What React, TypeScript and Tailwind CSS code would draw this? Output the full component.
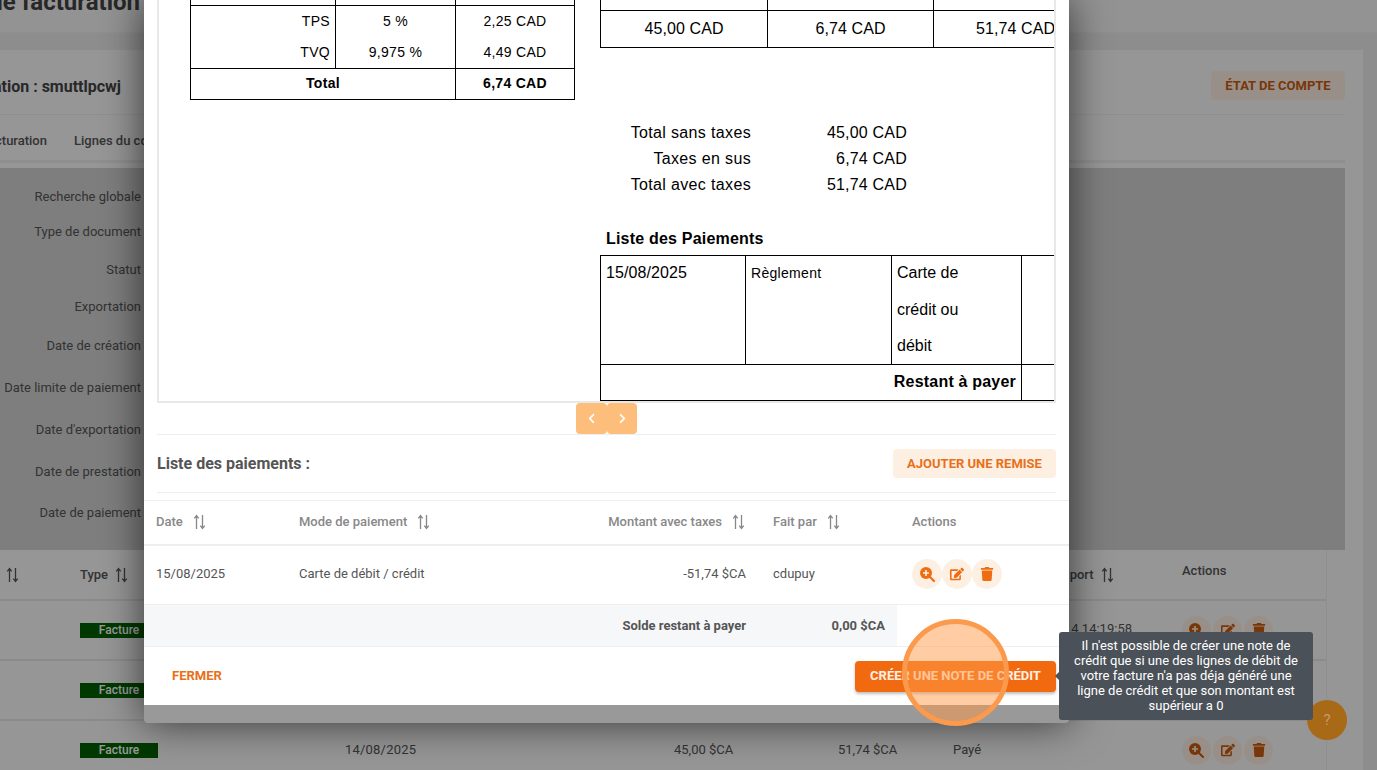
import React from "react";
import { FaEdit, FaTrash, FaChevronLeft, FaChevronRight } from "react-icons/fa";

const Sort = ({ className = "" }: { className?: string }) => (
  <svg width="15" height="16" viewBox="0 0 15 16" className={className} fill="none" stroke="currentColor" strokeWidth="1.3">
    <path d="M4.5 15V2M2.3 4.3 4.5 1.5l2.2 2.8" />
    <path d="M10.5 1v13M8.3 11.7l2.2 2.8 2.2-2.8" />
  </svg>
);

const Loupe = ({ plus }: { plus: string }) => (
  <svg width="15" height="15" viewBox="0 0 15 15">
    <circle cx="6" cy="6" r="6" fill="currentColor" />
    <path d="M6 3v6M3 6h6" stroke={plus} strokeWidth="1.6" />
    <path d="M10 10l4 4" stroke="currentColor" strokeWidth="2.2" strokeLinecap="round" />
  </svg>
);

const filters: [string, string][] = [
  ["Recherche globale", "h-[36px]"],
  ["Type de document", "h-[34px]"],
  ["Statut", "h-[42px]"],
  ["Exportation", "h-[32px]"],
  ["Date de création", "h-[46px]"],
  ["Date limite de paiement", "h-[38px]"],
  ["Date d'exportation", "h-[46px]"],
  ["Date de prestation", "h-[38px]"],
  ["Date de paiement", "h-[44px]"],
];

const BgActions = () => (
  <div className="flex gap-[2px]">
    <span className="w-[29px] h-[29px] rounded-full bg-[#fdf0e3] flex items-center justify-center text-[#c85a10] text-[14px]"><Loupe plus="#fdf0e3" /></span>
    <span className="w-[29px] h-[29px] rounded-full bg-[#fdf0e3] flex items-center justify-center text-[#c85a10] text-[14px]"><FaEdit /></span>
    <span className="w-[29px] h-[29px] rounded-full bg-[#fdf0e3] flex items-center justify-center text-[#c85a10] text-[14px]"><FaTrash /></span>
  </div>
);

const BgRow = ({ time }: { time?: boolean }) => (
  <div className="h-[60px] flex items-center border-b-2 border-[#e8e8e8] text-[13px] text-[#555]">
    <div className="w-[80px]" />
    <div className="w-[265px]">
      <span className="block w-[78px] h-[15px] bg-[#006000] text-white font-medium text-[12px] leading-[15px] text-center">Facture</span>
    </div>
    <div className="w-[329px] tracking-[0.2px]">14/08/2025</div>
    <div className="w-[164px]">45,00 $CA</div>
    <div className="w-[115px]">51,74 $CA</div>
    <div className="w-[60px]">Payé</div>
    <div className="w-[169px] pr-[50px] text-right -mt-[2px]">{time ? "2025-08-14 14:19:58" : ""}</div>
    <BgActions />
  </div>
);

const Background = () => (
  <div className="h-[770px] bg-[#ebebeb] flex flex-col overflow-hidden font-['Roboto',sans-serif]">
    <div className="h-[33px] shrink-0 bg-[#f6f6f6] overflow-hidden border-b border-[#eee]">
      <h1 className="text-[24px] leading-[24px] font-bold text-[#444] -mt-[10px] w-[140px] flex justify-end whitespace-nowrap">Détail de facturation</h1>
    </div>
    <div className="h-[17px] shrink-0" />
    <div className="flex-1 min-h-0 bg-[#fafafa] mr-[14px] flex flex-col">
      <div className="h-[65px] shrink-0 mr-[18px] border-b border-[#eee] flex items-center justify-between pt-[7px]">
        <span className="text-[16px] font-bold text-[#444] w-[121px] whitespace-nowrap flex justify-end pt-[2px]">Facturation : smuttlpcwj</span>
        <span className="w-[134px] h-[29px] rounded bg-[#fdf0e3] text-[#c85a10] text-[13px] font-bold flex items-center justify-center">ÉTAT DE COMPTE</span>
      </div>
      <div className="h-[48px] shrink-0 mr-[18px] border-b-[3px] border-[#eee] flex items-center text-[13px] font-medium text-[#555] pt-[6px]">
        <span className="w-[74px]"><span className="w-[47px] overflow-hidden whitespace-nowrap flex justify-end">Facturation</span></span>
        <span>Lignes du compte</span>
      </div>
      <div className="h-[5px] shrink-0" />
      <div className="h-[382px] shrink-0 mr-[18px] bg-[#d2d2d2] flex flex-col pt-[11px]">
        {filters.map(([label, h]) => (
          <div key={label} className={`${h} shrink-0 w-[141px] flex items-center justify-end text-[13px] text-[#555] whitespace-nowrap`}>{label}</div>
        ))}
      </div>
      <div className="mr-[36px] flex-1 border-r border-[#efefef]">
        <div className="h-[51px] flex items-center border-b-2 border-[#e8e8e8] text-[13px] font-medium text-[#555]">
          <div className="w-[80px] pl-[5px]"><Sort /></div>
          <div className="w-[937px] flex items-center gap-[6px]">Type <Sort /></div>
          <div className="w-[165px] flex items-center gap-[6px]">Date d'export <Sort /></div>
          <div className="-mt-[8px]">Actions</div>
        </div>
        <BgRow time />
        <BgRow time />
        <BgRow />
      </div>
    </div>
  </div>
);

const Cell = ({ className = "", children }: { className?: string; children?: React.ReactNode }) => (
  <div className={`flex items-center ${className}`}>{children}</div>
);

const Viewer = () => (
  <div className="h-[403px] shrink-0 mx-[13px] border-l-2 border-b-2 border-r-2 border-[#e8e8e8] overflow-hidden flex text-black font-['Liberation_Sans',sans-serif] bg-white">
    <div className="w-[441px] shrink-0 pl-[31px]">
      <div className="w-[385px] text-[14px] tracking-[0.3px] border-b border-x border-black">
        <div className="h-[6px] flex border-b border-black">
          <div className="w-[145px] border-r border-black" />
          <div className="w-[120px] border-r border-black" />
        </div>
        <div className="flex h-[31px]">
          <Cell className="w-[145px] justify-end pr-[5px] border-r border-black">TPS</Cell>
          <Cell className="w-[120px] justify-center border-r border-black">5 %</Cell>
          <Cell className="flex-1 justify-center">2,25 CAD</Cell>
        </div>
        <div className="flex h-[32px] border-b border-black">
          <Cell className="w-[145px] justify-end pr-[5px] border-r border-black">TVQ</Cell>
          <Cell className="w-[120px] justify-center border-r border-black">9,975 %</Cell>
          <Cell className="flex-1 justify-center">4,49 CAD</Cell>
        </div>
        <div className="flex h-[30px] font-bold">
          <Cell className="w-[265px] justify-center border-r border-black pb-[1px]">Total</Cell>
          <Cell className="flex-1 justify-center pb-[1px]">6,74 CAD</Cell>
        </div>
      </div>
    </div>
    <div className="flex-1 overflow-hidden text-[16px]">
      <div className="w-[500px]">
        <div className="h-[48px] border-b border-l border-black flex tracking-[0.1px]">
          <div className="w-[167px] flex flex-col border-r border-black">
            <div className="h-[11px] border-b border-black -mr-[500px]" />
            <div className="flex-1 flex items-center justify-center">45,00 CAD</div>
          </div>
          <div className="w-[166px] flex flex-col border-r border-black">
            <div className="h-[11px]" />
            <div className="flex-1 flex items-center justify-center">6,74 CAD</div>
          </div>
          <div className="flex flex-col pl-[42px]">
            <div className="h-[11px]" />
            <div className="flex-1 flex items-center whitespace-nowrap">51,74 CAD</div>
          </div>
        </div>
      </div>
      <div className="pt-[72px] w-[307px] leading-[26px] tracking-[0.2px]">
        {[["Total sans taxes", "45,00 CAD"], ["Taxes en sus", "6,74 CAD"], ["Total avec taxes", "51,74 CAD"]].map(([a, b]) => (
          <div key={a} className="flex justify-between">
            <span className="w-[151px] text-right whitespace-nowrap flex justify-end tracking-[0.35px]">{a}</span>
            <span className="text-right">{b}</span>
          </div>
        ))}
      </div>
      <div className="pl-[6px] pt-[28px] h-[58px] font-bold tracking-[0.2px] leading-[26px]">Liste des Paiements</div>
      <div className="w-[500px] border border-black -mt-[1px] h-[146px] flex flex-col">
        <div className="h-[109px] flex border-b border-black">
          <div className="w-[145px] border-r border-black px-[5px] pt-[4px] leading-[26px] tracking-[0.1px]">15/08/2025</div>
          <div className="w-[146px] border-r border-black px-[5px] pt-[3px] text-[14px] tracking-[0.3px] leading-[28px]">Règlement</div>
          <div className="w-[130px] border-r border-black px-[5px] -mt-[1px] leading-[36.5px]">Carte de<br />crédit ou<br />débit</div>
        </div>
        <div className="flex-1 flex">
          <div className="w-[421px] border-r border-black flex items-center justify-end pr-[5px] pb-[2px] font-bold tracking-[0.2px]">Restant à payer</div>
        </div>
      </div>
    </div>
  </div>
);

const Action = ({ children }: { children: React.ReactNode }) => (
  <span className="w-[30px] h-[30px] rounded-full bg-[#fdf0e3] flex items-center justify-center text-[#ef6c12] text-[14px]">{children}</span>
);

const TH = ({ children, className = "" }: { children: React.ReactNode; className?: string }) => (
  <div className={`flex items-center gap-[9px] ${className}`}>{children}</div>
);

const gridCols = "grid grid-cols-[143px_273px_201px_136px_172px]";

const Modal = () => (
  <div className="absolute left-[144px] top-0 w-[925px] h-[723px] bg-[#999] rounded-b shadow-[0_0_40px_rgba(0,0,0,0.65)]">
    <div className="h-[705px] bg-white font-['Roboto',sans-serif] flex flex-col">
      <Viewer />
      <div className="h-[32px] shrink-0 mx-[13px] flex justify-center border-b border-[#eee]">
        <div className="flex h-[31px]">
          <button className="w-[31px] h-[31px] rounded bg-[#fdbe7c] text-white text-[11px] flex items-center justify-center"><FaChevronLeft /></button>
          <button className="w-[30px] h-[31px] rounded bg-[#fdbe7c] text-white text-[11px] flex items-center justify-center"><FaChevronRight /></button>
        </div>
      </div>
      <div className="h-[58px] shrink-0 mx-[13px] border-b border-[#eee] flex items-center justify-between">
        <span className="text-[16px] font-bold text-[#555]">Liste des paiements :</span>
        <button className="w-[163px] h-[29px] rounded bg-[#fdf0e3] text-[#e8701a] text-[13px] font-bold">AJOUTER UNE REMISE</button>
      </div>
      <div className="h-[8px] shrink-0 border-b border-[#eee]" />
      <div className={`${gridCols} h-[45px] shrink-0 border-b-2 border-[#eee] items-center text-[13px] font-medium text-[#888] pb-[2px]`}>
        <TH className="pl-3">Date <Sort /></TH>
        <TH className="pl-3">Mode de paiement <Sort /></TH>
        <TH className="justify-end pr-[15px]">Montant avec taxes <Sort /></TH>
        <TH className="pl-3">Fait par <Sort /></TH>
        <TH className="pl-[15px]">Actions</TH>
      </div>
      <div className={`${gridCols} h-[59px] shrink-0 border-b border-[#eee] items-center text-[13px] text-[#555] pb-[2px]`}>
        <div className="pl-3">15/08/2025</div>
        <div className="pl-3">Carte de débit / crédit</div>
        <div className="text-right pr-[15px]">-51,74 $CA</div>
        <div className="pl-3">cdupuy</div>
        <div className="pl-[15px] flex">
          <Action><Loupe plus="#fdf0e3" /></Action>
          <Action><FaEdit /></Action>
          <Action><FaTrash /></Action>
        </div>
      </div>
      <div className={`${gridCols} h-[42px] shrink-0 border-b border-[#eee] items-center text-[13px] font-bold text-[#555]`}>
        <div className="col-span-3 h-full bg-[#f6f7f9] flex items-center justify-end pr-[15px]">Solde restant à payer</div>
        <div className="h-full bg-[#f6f7f9] flex items-center justify-end pr-3">0,00 $CA</div>
        <div />
      </div>
      <div className="flex-1 flex items-center justify-between pl-[28px] pr-[13px]">
        <span className="text-[#e8701a] text-[13px] font-bold">FERMER</span>
        <button className="w-[201px] h-[31px] rounded bg-[#f26a0f] text-white/90 text-[13px] font-bold shadow-[0_2px_3px_rgba(0,0,0,0.25)]">CRÉER UNE NOTE DE CRÉDIT</button>
      </div>
    </div>
  </div>
);

export default function App() {
  return (
    <div className="relative w-[1377px] h-[770px] overflow-hidden">
      <Background />
      <div className="absolute inset-0 bg-black/40" />
      <button className="absolute left-[1307px] top-[700px] w-[40px] h-[40px] rounded-full bg-[#a96a18] text-[#c79a68] text-[15px] font-['Roboto',sans-serif] flex items-center justify-center">?</button>
      <Modal />
      <div className="absolute left-[902px] top-[619px] w-[107px] h-[107px] rounded-full bg-[#ff9a4a]/50 border-[5px] border-[#fb9a4d]" />
      <div className="absolute left-[1059px] top-[632px] w-[254px] h-[88px] rounded-[3px] bg-[#4b5158] text-white text-[13px] leading-[15px] text-center px-[10px] py-[6px] font-['Roboto',sans-serif]">
        <span className="absolute -left-[4px] top-[40px] w-0 h-0 border-y-[4px] border-y-transparent border-r-[4px] border-r-[#4b5158]" />
        Il n'est possible de créer une note de crédit que si une des lignes de débit de votre facture n'a pas déja généré une ligne de crédit et que son montant est supérieur a 0
      </div>
    </div>
  );
}
